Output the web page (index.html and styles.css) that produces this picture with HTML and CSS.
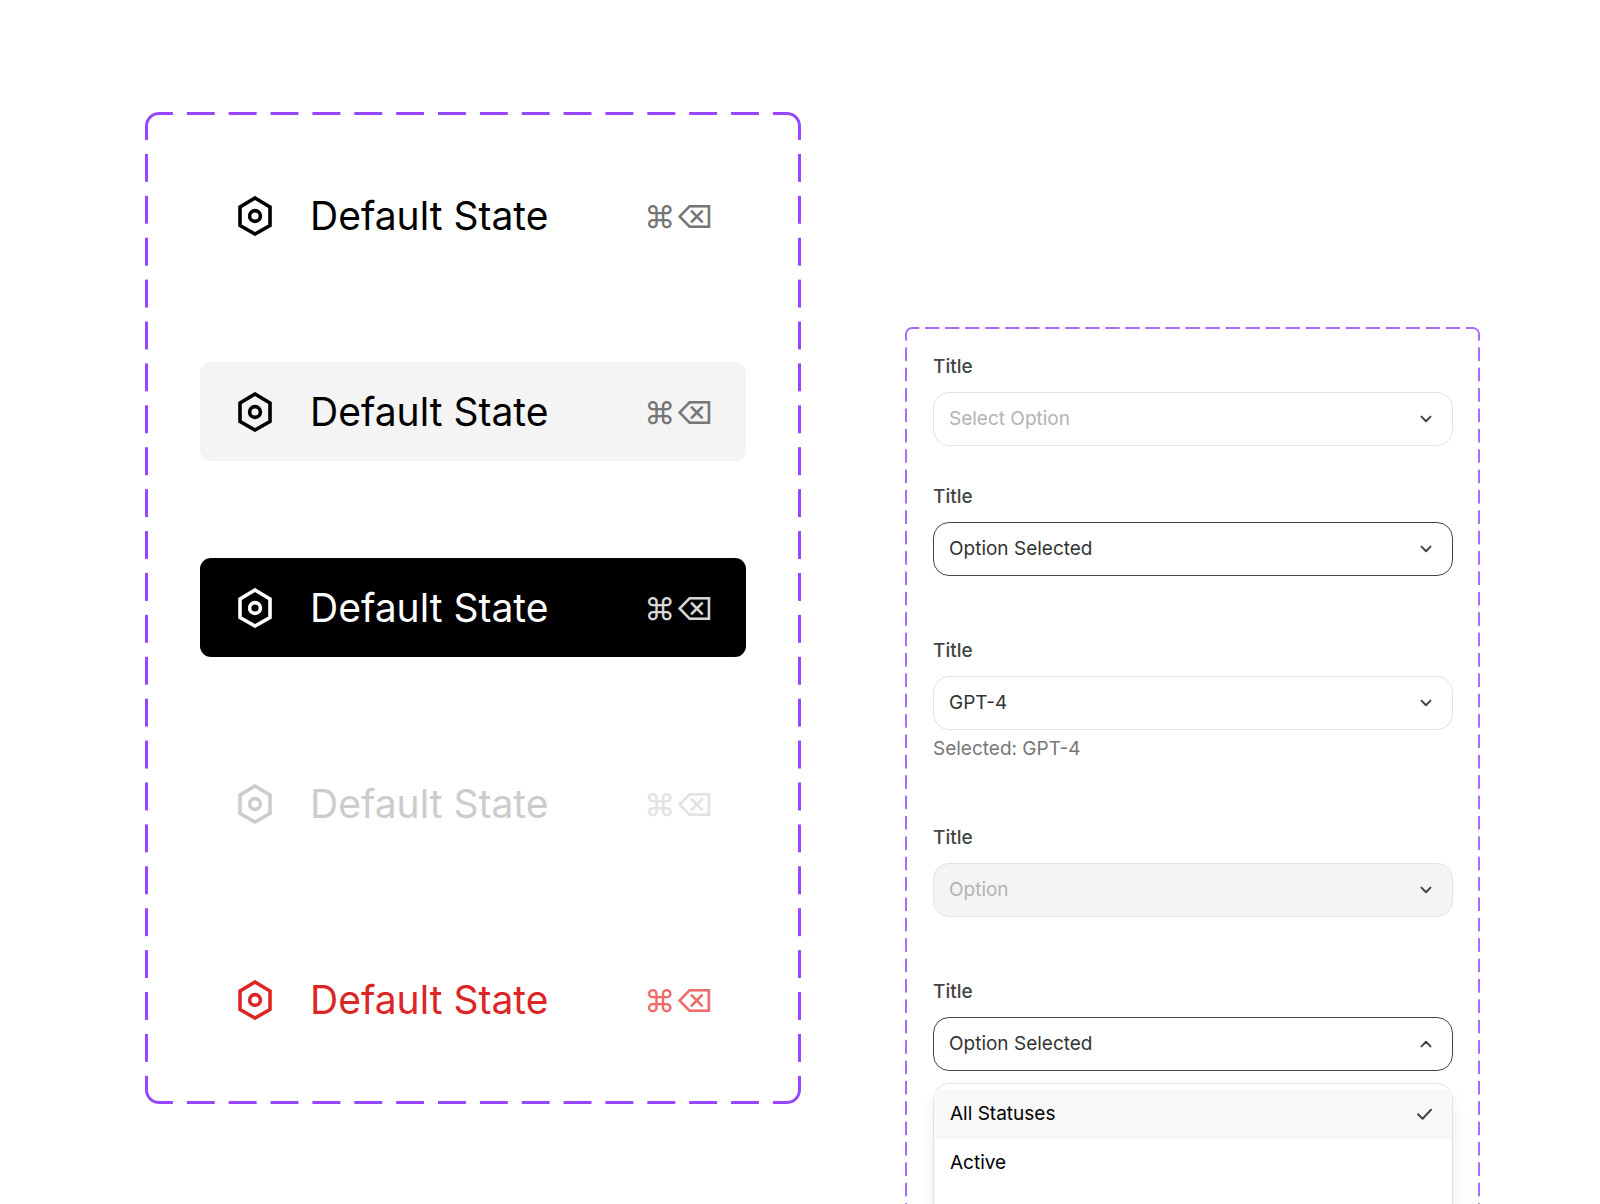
FILE: index.html
```
<!DOCTYPE html>
<html lang="en">
<head>
    <meta charset="UTF-8">
    <meta name="viewport" content="width=device-width, initial-scale=1.0">
    <title>Menu and Select States</title>
    <link rel="stylesheet" href="styles.css">
</head>
<body>
    <!-- Shared icons -->
    <svg class="icon-defs" aria-hidden="true">
        <symbol id="icon-hex" viewBox="0 0 40 40">
            <path d="M20 2 L35 11 V29.5 L20 38 L5 29.5 V11 Z" fill="none" stroke="currentColor" stroke-width="3.6"/>
            <circle cx="20" cy="20" r="5.4" fill="none" stroke="currentColor" stroke-width="3.6"/>
        </symbol>
        <symbol id="icon-chevron" viewBox="0 0 20 20">
            <path d="M5.5 7.6 L10 12.2 L14.5 7.6" fill="none" stroke="currentColor" stroke-width="2" stroke-linecap="round" stroke-linejoin="round"/>
        </symbol>
        <symbol id="icon-check" viewBox="0 0 20 20">
            <path d="M3 10.2 L7.6 14.8 L16 5.8" fill="none" stroke="currentColor" stroke-width="2" stroke-linecap="round" stroke-linejoin="round"/>
        </symbol>
    </svg>

    <main>
        <!-- Menu item states -->
        <section class="frame frame-menu">
            <button type="button" class="item">
                <svg class="item-icon"><use href="#icon-hex"/></svg>
                <span class="item-label">Default State</span>
                <kbd>⌘⌫</kbd>
            </button>
            <button type="button" class="item item-hover">
                <svg class="item-icon"><use href="#icon-hex"/></svg>
                <span class="item-label">Default State</span>
                <kbd>⌘⌫</kbd>
            </button>
            <button type="button" class="item item-active">
                <svg class="item-icon"><use href="#icon-hex"/></svg>
                <span class="item-label">Default State</span>
                <kbd>⌘⌫</kbd>
            </button>
            <button type="button" class="item item-disabled" disabled>
                <svg class="item-icon"><use href="#icon-hex"/></svg>
                <span class="item-label">Default State</span>
                <kbd>⌘⌫</kbd>
            </button>
            <button type="button" class="item item-danger">
                <svg class="item-icon"><use href="#icon-hex"/></svg>
                <span class="item-label">Default State</span>
                <kbd>⌘⌫</kbd>
            </button>
        </section>

        <!-- Select states -->
        <section class="frame frame-select">
            <div class="field">
                <label for="select-empty">Title</label>
                <div class="select-box">
                    <select id="select-empty" class="placeholder">
                        <option>Select Option</option>
                    </select>
                    <svg class="chevron"><use href="#icon-chevron"/></svg>
                </div>
            </div>
            <div class="field field-near">
                <label for="select-focus">Title</label>
                <div class="select-box">
                    <select id="select-focus" class="focused">
                        <option>Option Selected</option>
                    </select>
                    <svg class="chevron"><use href="#icon-chevron"/></svg>
                </div>
            </div>
            <div class="field">
                <label for="select-model">Title</label>
                <div class="select-box">
                    <select id="select-model" aria-describedby="model-help">
                        <option>GPT-4</option>
                    </select>
                    <svg class="chevron"><use href="#icon-chevron"/></svg>
                </div>
                <p class="help" id="model-help">Selected: GPT-4</p>
            </div>
            <div class="field">
                <label for="select-disabled">Title</label>
                <div class="select-box">
                    <select id="select-disabled" disabled>
                        <option>Option</option>
                    </select>
                    <svg class="chevron"><use href="#icon-chevron"/></svg>
                </div>
            </div>
            <div class="field">
                <label for="select-open">Title</label>
                <div class="select-box">
                    <select id="select-open" class="focused">
                        <option>Option Selected</option>
                    </select>
                    <svg class="chevron chevron-up"><use href="#icon-chevron"/></svg>
                </div>
                <ul class="options" role="listbox">
                    <li class="option option-current" role="option" aria-selected="true">
                        All Statuses
                        <svg class="check"><use href="#icon-check"/></svg>
                    </li>
                    <li class="option" role="option">Active</li>
                </ul>
            </div>
        </section>
    </main>
</body>
</html>
```
FILE: styles.css
```
* {
    box-sizing: border-box;
}

body {
    margin: 0;
    height: 100vh;
    overflow: hidden;
    background: #fff;
    color: #000;
    font-family: Inter, "Liberation Sans", sans-serif;
}

.icon-defs {
    display: none;
}

main {
    display: grid;
    grid-template-columns: 656fr 575fr;
    align-items: start;
    gap: 104px;
    padding: 112px 120px 0 145px;
}

/* Dashed frame: a solid rounded border cut into dashes by a mask */
.frame {
    position: relative;
    display: flex;
    flex-direction: column;
}

.frame::before {
    content: "";
    position: absolute;
    inset: 0;
    border: var(--line) solid #9747ff;
    border-radius: var(--dash-half);
    pointer-events: none;
    --step-x: calc((100% - var(--dash)) / var(--count-x));
    --step-y: calc((100% - var(--dash)) / var(--count-y));
    --across: linear-gradient(90deg, #000 var(--dash), transparent var(--dash));
    --down: linear-gradient(#000 var(--dash), transparent var(--dash));
    mask-image: var(--across), var(--across), var(--down), var(--down);
    mask-size: var(--step-x) var(--dash-half), var(--step-x) var(--dash-half), var(--dash-half) var(--step-y), var(--dash-half) var(--step-y);
    mask-position: left top, left bottom, left top, right top;
    mask-repeat: repeat-x, repeat-x, repeat-y, repeat-y;
}

.frame-menu {
    --line: 3px;
    --dash: 28px;
    --dash-half: 14px;
    --count-x: 15;
    --count-y: 23;
    gap: 97px;
    padding: 54px 55px 55px;
}

.frame-select {
    --line: 2px;
    --dash: 14px;
    --dash-half: 7px;
    --count-x: 28;
    --count-y: 47;
    gap: 61px;
    margin-top: 215px;
    padding: 26px 27px 30px 28px;
}

.frame-select::before {
    opacity: 0.8;
}

/* Menu items */
.item {
    display: flex;
    align-items: center;
    gap: 35px;
    height: 99px;
    padding: 0 33px 0 35px;
    border: 0;
    border-radius: 11px;
    background: none;
    color: #000;
    font: 400 39px/48px Inter, "Liberation Sans", sans-serif;
    text-align: left;
}

.item-icon {
    flex: none;
    width: 40px;
    height: 40px;
}

.item-label {
    flex: 1;
    white-space: nowrap;
}

.item kbd {
    padding-top: 3px;
    color: #767676;
    font: 400 31px/48px Inter, "Liberation Sans", sans-serif;
}

.item-hover {
    background: #f4f4f4;
}

.item-active {
    background: #000;
    color: #fff;
}

.item-active kbd {
    color: #d6d6d6;
}

.item-disabled {
    color: #ccc;
}

.item-disabled kbd {
    color: #e2e2e2;
}

.item-danger {
    color: #dc2626;
}

.item-danger kbd {
    color: #ef6a6a;
}

/* Select fields */
.field {
    display: flex;
    flex-direction: column;
    font-size: 19px;
    line-height: 28px;
}

.field-near {
    margin-top: -24px;
}

.field label {
    margin-bottom: 11px;
    color: #444;
    font-weight: 500;
}

.select-box {
    display: grid;
    align-items: center;
}

.select-box select,
.chevron {
    grid-area: 1 / 1;
}

.select-box select {
    appearance: none;
    width: 100%;
    height: 54px;
    padding: 0 48px 0 15px;
    border: 1px solid #e2e2e2;
    border-radius: 16px;
    background: #fff;
    color: #333;
    font: inherit;
    outline: none;
}

.select-box .placeholder {
    color: #b3b3b3;
}

.select-box .focused {
    border-color: #444;
}

.select-box select:disabled {
    background: #f4f4f4;
    color: #b3b3b3;
    opacity: 1;
}

.chevron {
    justify-self: end;
    width: 20px;
    height: 20px;
    margin-right: 17px;
    color: #444;
    pointer-events: none;
}

.chevron-up {
    transform: rotate(180deg);
}

.help {
    margin: 5px 0 0;
    color: #777;
}

.options {
    margin: 12px 0 0;
    padding: 6px 0 80px;
    border: 1px solid #e2e2e2;
    border-radius: 16px;
    background: #fff;
    box-shadow: 0 12px 16px rgba(0, 0, 0, 0.08);
    list-style: none;
}

.option {
    display: flex;
    align-items: center;
    justify-content: space-between;
    height: 49px;
    padding: 0 17px 2px 16px;
    color: #000;
}

.option-current {
    background: #f8f8f8;
}

.check {
    width: 20px;
    height: 20px;
    color: #444;
}
```
